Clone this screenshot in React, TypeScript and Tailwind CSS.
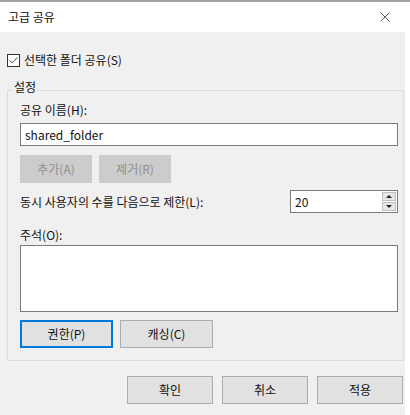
import { Check, X } from "lucide-react";

const font = { fontFamily: '"Noto Sans CJK KR", sans-serif' };

const Btn = ({ label, w, disabled, focused }: { label: string; w: string; disabled?: boolean; focused?: boolean }) => (
  <div
    className={`${w} h-[28px] flex items-center justify-center ${
      disabled
        ? "bg-[#cccccc] border border-[#cccccc] text-[#8f8f8f]"
        : focused
        ? "bg-[#e1e1e1] border-2 border-[#0078d7] text-[#111]"
        : "bg-[#e1e1e1] border border-[#adadad] text-[#111]"
    }`}
  >
    {label}
  </div>
);

const App = () => {
  return (
    <div className="w-[410px] h-[415px] bg-white flex flex-col overflow-hidden text-[12px] leading-[16px] text-[#111]" style={font}>
      <div className="h-[2px] bg-[#a3a3a3]" />
      <div className="h-[30px] flex items-center justify-between pl-[8px] pr-[17px]">
        <span>고급 공유</span>
        <X className="w-[16px] h-[16px] text-[#333]" strokeWidth={1.2} />
      </div>
      <div className="flex-1 bg-[#f0f0f0] mr-[5px] flex flex-col pl-[7px] pr-[1px] pt-[20px]">
        <div className="h-[16px] flex items-center gap-[4px]">
          <div className="w-[13px] h-[13px] border border-[#333] bg-white flex items-center justify-center">
            <Check className="w-[11px] h-[11px] text-[#222]" strokeWidth={1.8} />
          </div>
          <span>선택한 폴더 공유(S)</span>
        </div>
        <div className="relative mt-[22px] border border-[#dcdcdc] pl-[12px] pr-[5px] pt-[11px] pb-[12px] flex flex-col">
          <span className="absolute -top-[12px] left-[4px] px-[2px] bg-[#f0f0f0]">설정</span>
          <span>공유 이름(H):</span>
          <div className="mt-[5px] h-[23px] border border-[#7a7a7a] bg-white flex items-center pl-[4px]">shared_folder</div>
          <div className="mt-[9px] flex gap-[7px]">
            <Btn label="추가(A)" w="w-[72px]" disabled />
            <Btn label="제거(R)" w="w-[72px]" disabled />
          </div>
          <div className="mt-[7px] flex items-center justify-between">
            <span>동시 사용자의 수를 다음으로 제한(L):</span>
            <div className="w-[108px] h-[23px] border border-[#7a7a7a] bg-white flex items-center">
              <span className="flex-1 pl-[4px]">20</span>
              <div className="w-[16px] h-full flex flex-col gap-[1px] p-[1px]">
                <div className="flex-1 bg-[#e6e6e6] border border-[#c0c0c0] flex items-center justify-center">
                  <div className="w-0 h-0 border-l-[3px] border-r-[3px] border-b-[3px] border-l-transparent border-r-transparent border-b-[#222]" />
                </div>
                <div className="flex-1 bg-[#e6e6e6] border border-[#c0c0c0] flex items-center justify-center">
                  <div className="w-0 h-0 border-l-[3px] border-r-[3px] border-t-[3px] border-l-transparent border-r-transparent border-t-[#222]" />
                </div>
              </div>
            </div>
          </div>
          <span className="mt-[14px]">주석(O):</span>
          <div className="mt-[2px] h-[67px] border border-[#7a7a7a] bg-white" />
          <div className="mt-[8px] flex gap-[7px]">
            <Btn label="권한(P)" w="w-[93px]" focused />
            <Btn label="캐싱(C)" w="w-[93px]" />
          </div>
        </div>
        <div className="mt-[15px] flex justify-end gap-[9px] pr-[1px]">
          <Btn label="확인" w="w-[86px]" />
          <Btn label="취소" w="w-[86px]" />
          <Btn label="적용" w="w-[86px]" />
        </div>
      </div>
    </div>
  );
};

export default App;
